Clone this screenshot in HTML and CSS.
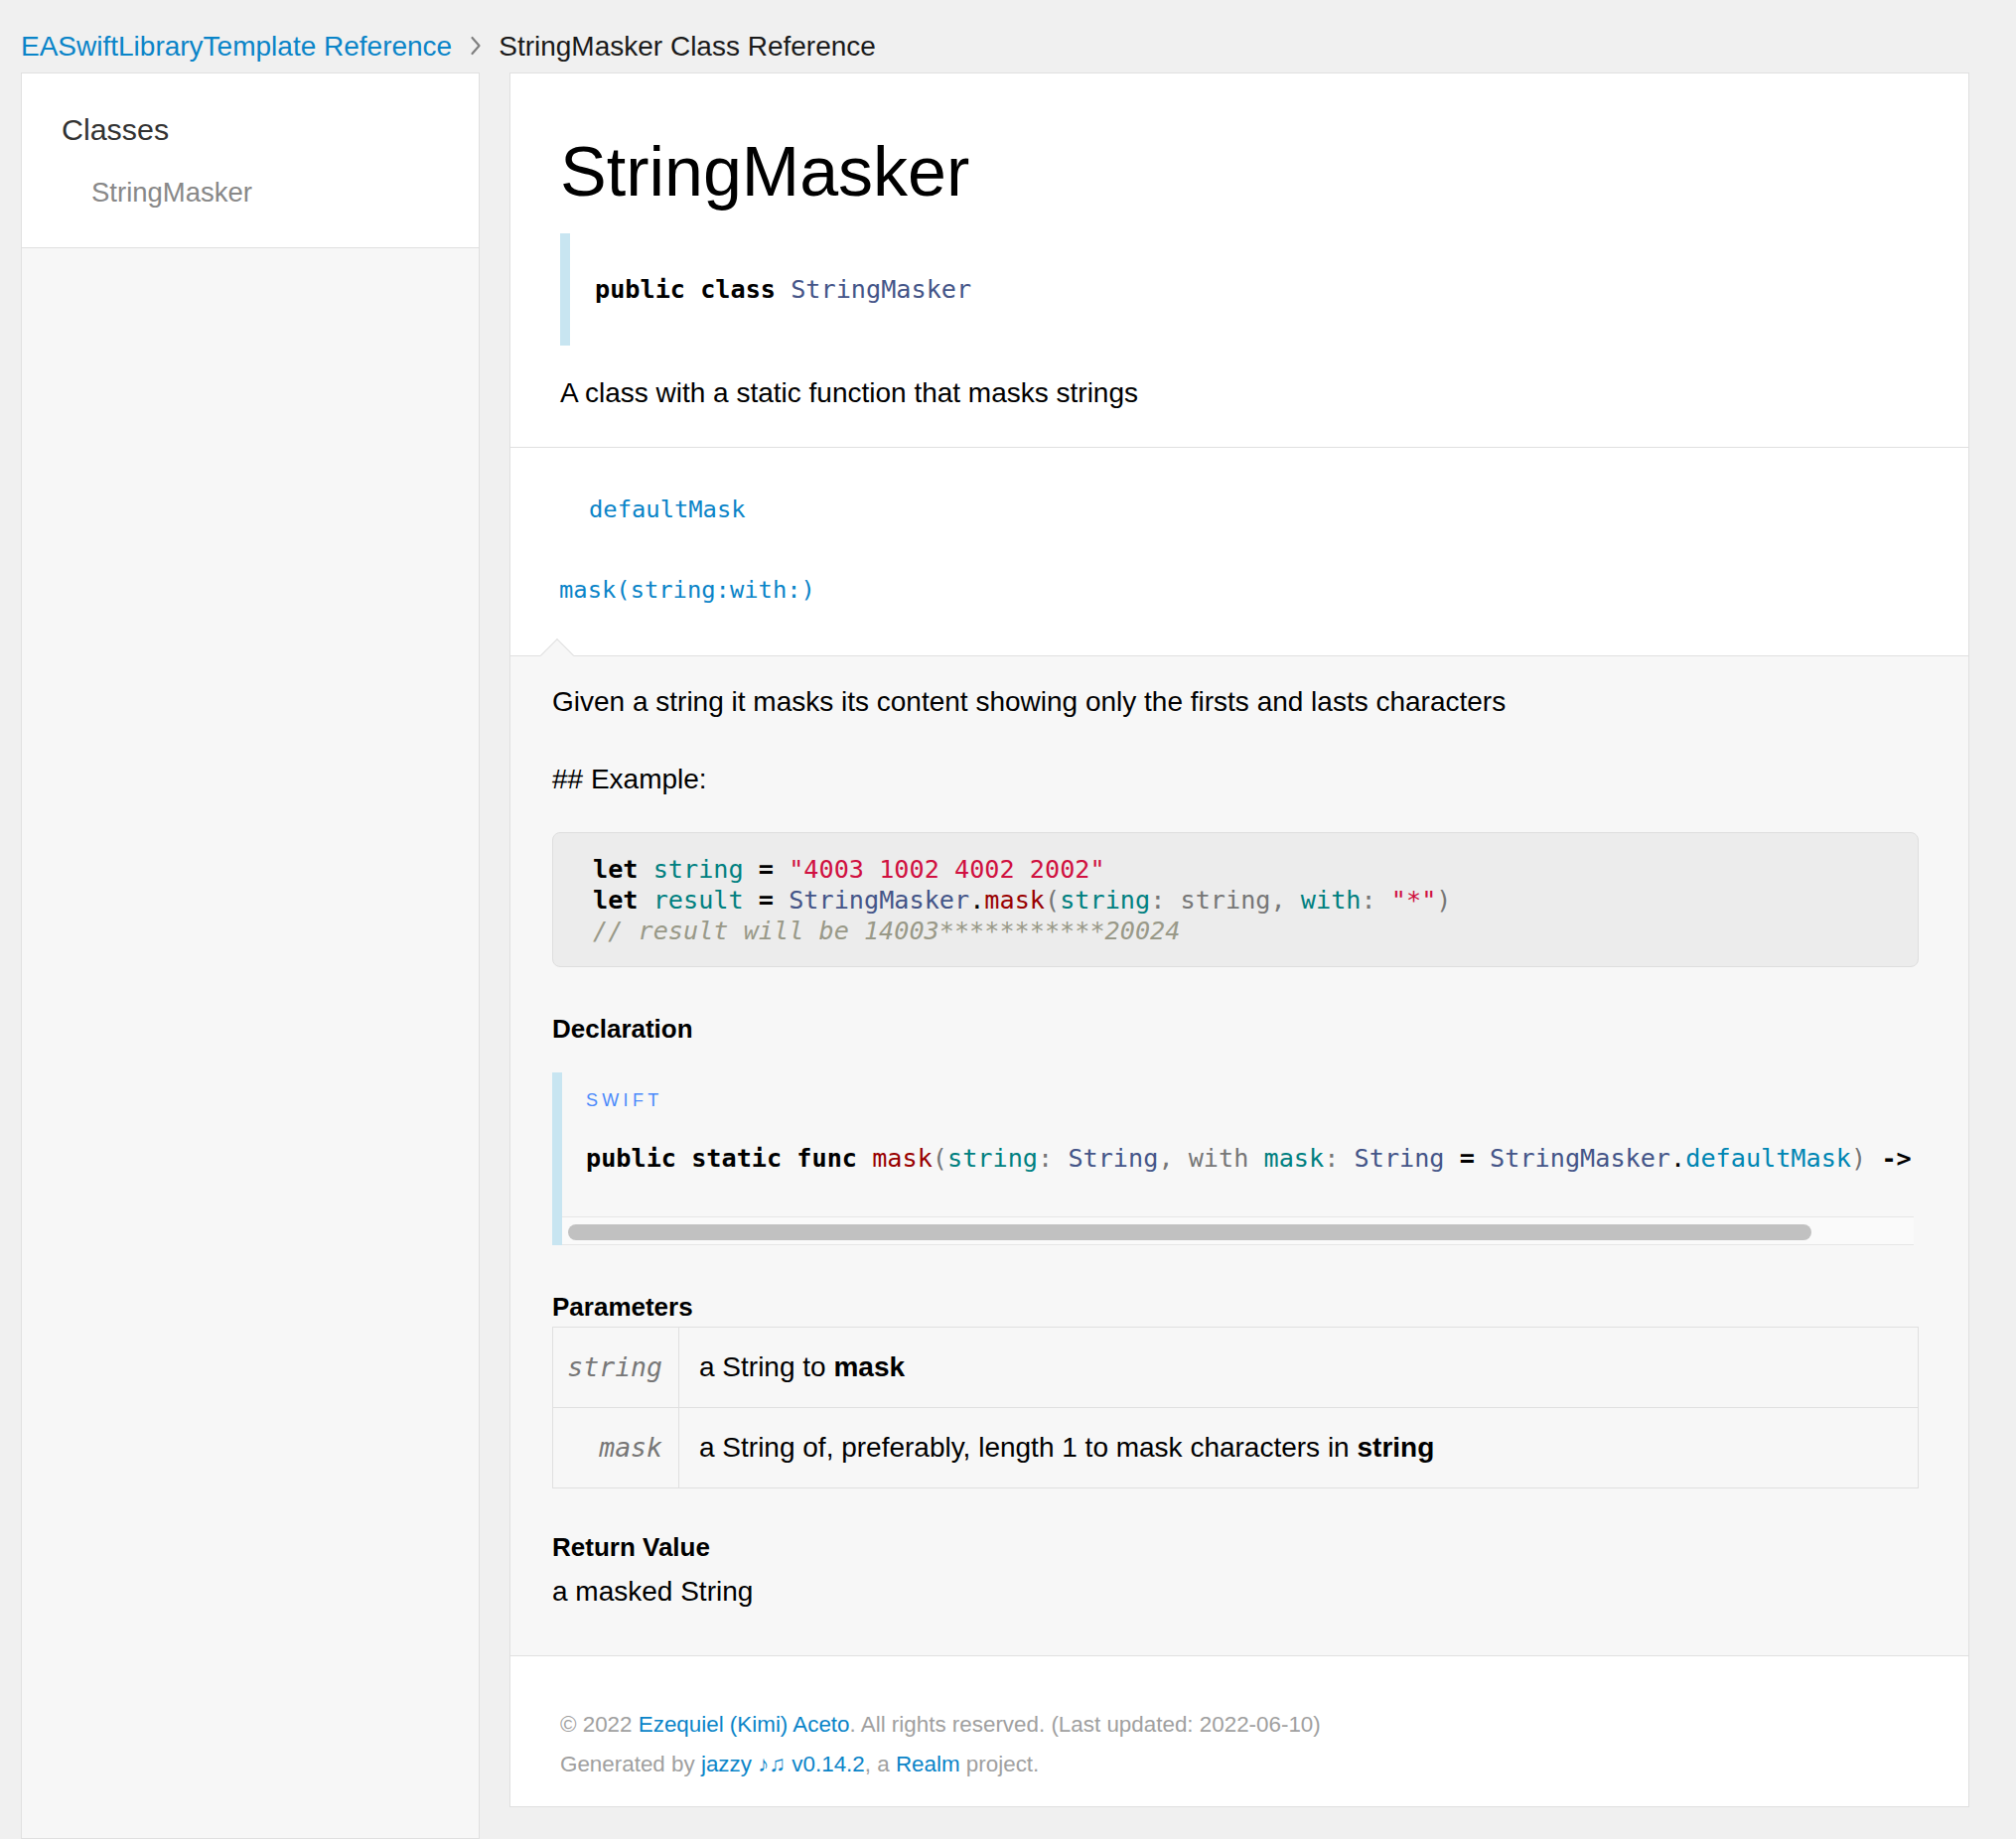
FILE: index.html
```html
<!DOCTYPE html>
<html lang="en">
<head>
<meta charset="utf-8">
<title>StringMasker Class Reference</title>
<link rel="stylesheet" href="styles.css">
</head>
<body>
<p class="breadcrumbs"><a href="#">EASwiftLibraryTemplate Reference</a><svg class="carat" width="12" height="20" viewBox="0 0 12 20"><path d="M2.5 2 L9.5 10 L2.5 18" fill="none" stroke="#808080" stroke-width="2.2" stroke-linecap="round" stroke-linejoin="round"/></svg>StringMasker Class Reference</p>
<div class="layout">
  <nav class="sidebar">
    <div class="nav-group">
      <div class="nav-group-name">Classes</div>
      <ul class="nav-group-tasks"><li><a href="#">StringMasker</a></li></ul>
    </div>
  </nav>
  <main class="main-content">
    <section class="intro">
      <h1>StringMasker</h1>
      <div class="declaration"><code><span class="k">public</span> <span class="k">class</span> <span class="kt">StringMasker</span></code></div>
      <p class="lead">A class with a static function that masks strings</p>
    </section>
    <section class="task-group">
      <ul class="tokens">
        <li class="token-item indented"><a class="token" href="#">defaultMask</a></li>
        <li class="token-item second"><a class="token" href="#">mask(string:with:)</a></li>
      </ul>
      <div class="pointer"></div>
    </section>
    <section class="details">
      <p class="first">Given a string it masks its content showing only the firsts and lasts characters</p>
      <p class="example">## Example:</p>
      <pre class="highlight"><code><span class="k">let</span> <span class="n">string</span> <span class="o">=</span> <span class="s">"4003 1002 4002 2002"</span>
<span class="k">let</span> <span class="n">result</span> <span class="o">=</span> <span class="kt">StringMasker</span><span class="dot">.</span><span class="nf">mask</span>(<span class="n">string</span>: string, <span class="n">with</span>: <span class="s">"*"</span>)
<span class="c">// result will be 14003***********20024</span></code></pre>
      <h4 class="first-h">Declaration</h4>
      <div class="language">
        <p class="aside-title">Swift</p>
        <div class="decl-code"><code><span class="k">public</span> <span class="k">static</span> <span class="k">func</span> <span class="nf">mask</span>(<span class="n">string</span>: <span class="kt">String</span>, with <span class="n">mask</span>: <span class="kt">String</span> <span class="o">=</span> <span class="kt">StringMasker</span><span class="dot">.</span><span class="nv">defaultMask</span>) <span class="o">-&gt;</span></code></div>
        <div class="scroll-track"><div class="scroll-thumb"></div></div>
      </div>
      <h4>Parameters</h4>
      <table class="graybox">
        <tbody>
          <tr>
            <td class="param-name"><em>string</em></td>
            <td class="param-desc">a String to <strong>mask</strong></td>
          </tr>
          <tr>
            <td class="param-name"><em>mask</em></td>
            <td class="param-desc">a String of, preferably, length 1 to mask characters in <strong>string</strong></td>
          </tr>
        </tbody>
      </table>
      <h4 class="return-h">Return Value</h4>
      <p class="return">a masked String</p>
    </section>
    <footer class="footer">
      <p>© 2022 <a href="#">Ezequiel (Kimi) Aceto</a>. All rights reserved. (Last updated: 2022-06-10)</p>
      <p>Generated by <a href="#">jazzy ♪♫ v0.14.2</a>, a <a href="#">Realm</a> project.</p>
    </footer>
  </main>
</div>
</body>
</html>
```

FILE: styles.css
```css
* {
  box-sizing: border-box;
}

html, body {
  margin: 0;
  padding: 0;
}

body {
  background: #f0f0f0;
  font-family: "Liberation Sans", Arial, Helvetica, sans-serif;
  font-size: 28px;
  color: #000;
  padding-left: 21px;
}

a {
  color: #0a84c8;
  text-decoration: none;
}

ul {
  list-style: none;
  margin: 0;
  padding: 0;
}

code, pre {
  font-family: "DejaVu Sans Mono", "Liberation Mono", monospace;
}

/* breadcrumbs */
.breadcrumbs {
  margin: 0;
  padding-top: 20px;
  height: 73px;
  line-height: 53px;
  font-size: 28px;
  color: #1a1a1a;
  white-space: nowrap;
}

.carat {
  margin: 0 17px 0 18px;
  vertical-align: baseline;
}

/* layout */
.layout {
  display: flex;
  align-items: flex-start;
  gap: 30px;
}

.sidebar {
  width: 462px;
  flex: none;
  min-height: calc(100vh - 73px);
  background: #f7f7f7;
  border: 1px solid #e0e0e0;
}

.nav-group {
  background: #fff;
  border-bottom: 1px solid #e0e0e0;
  padding: 36px 0 35px 40px;
}

.nav-group-name {
  font-size: 30.4px;
  line-height: 40px;
  color: #333;
}

.nav-group-tasks {
  margin-top: 24px;
  padding-left: 30px;
}

.nav-group-tasks li {
  font-size: 27.5px;
  line-height: 40px;
}

.nav-group-tasks a {
  color: #888;
}

/* main */
.main-content {
  width: 1470px;
  flex: none;
  background: #fff;
  border: 1px solid #e0e0e0;
}

.intro {
  padding: 0 50px 34px 50px;
  border-bottom: 1px solid #e0e0e0;
}

h1 {
  margin: 59px 0 22px;
  font-size: 70px;
  line-height: 80px;
  font-weight: normal;
  color: #000;
}

.declaration {
  border-left: 10px solid #c8e5f1;
  padding: 41px 0 41px 25px;
  font-size: 25.2px;
  line-height: 30px;
}

.declaration code,
.decl-code code,
.highlight code {
  font-size: 25.2px;
  color: #777;
}

.lead {
  margin: 28px 0 0;
  line-height: 40px;
}

/* code tokens */
.k, .o {
  color: #000;
  font-weight: bold;
}

.kt {
  color: #445588;
}

.n {
  color: #008080;
}

.nf {
  color: #990000;
}

.s {
  color: #d01040;
}

.nv {
  color: #0086b3;
}

.dot {
  color: #000;
}

.c {
  color: #999988;
  font-style: italic;
}

/* task group */
.task-group {
  position: relative;
  border-bottom: 1px solid #e0e0e0;
}

.tokens {
  padding: 46px 0 50px 49px;
}

.token-item {
  font-size: 23.8px;
  line-height: 32px;
}

.token-item.indented {
  padding-left: 30px;
}

.token-item.second {
  margin-top: 49px;
}

.token {
  font-family: "DejaVu Sans Mono", "Liberation Mono", monospace;
  font-size: 23.8px;
  color: #0a84c8;
}

.pointer {
  position: absolute;
  left: 35px;
  bottom: -12px;
  width: 24px;
  height: 24px;
  background: #f7f7f7;
  border-top: 1px solid #e0e0e0;
  border-left: 1px solid #e0e0e0;
  transform: rotate(45deg);
  z-index: 1;
}

/* details */
.details {
  background: #f7f7f7;
  border-bottom: 1px solid #e0e0e0;
  padding: 26px 50px 44px 42px;
}

.details p {
  margin: 0;
  line-height: 40px;
}

.details p.example {
  margin-top: 38px;
}

.highlight {
  margin: 33px 0 0;
  background: #ececec;
  border: 1px solid #dedede;
  border-radius: 8px;
  padding: 21px 40px 20px 40px;
  font-size: 25.2px;
  line-height: 31px;
  overflow: hidden;
}

h4 {
  margin: 44px 0 0;
  font-size: 26px;
  line-height: 36px;
  font-weight: bold;
  color: #000;
}

h4.return-h {
  margin-top: 41px;
}

.language {
  margin-top: 26px;
  border-left: 10px solid #c8e5f1;
  padding-top: 16px;
}

.details .aside-title {
  margin: 0;
  padding-left: 24px;
  font-size: 18px;
  line-height: 24px;
  letter-spacing: 4.3px;
  text-transform: uppercase;
  color: #4b8afb;
}

.decl-code {
  margin-top: 31px;
  padding: 0 0 43px 24px;
  font-size: 25.2px;
  line-height: 30px;
  white-space: nowrap;
  overflow: hidden;
}

.scroll-track {
  height: 29px;
  border-top: 1px solid #e6e6e6;
  border-bottom: 1px solid #e6e6e6;
  background: #fafafa;
  padding: 7px 0 0 6px;
  margin-right: 5px;
}

.scroll-thumb {
  width: 1252px;
  height: 16px;
  border-radius: 8px;
  background: #c1c1c1;
}

.graybox {
  margin-top: 2px;
  width: 100%;
  border-collapse: collapse;
}

.graybox td {
  border: 1px solid #e0e0e0;
  padding: 20px 20px;
  line-height: 40px;
  vertical-align: middle;
}

.graybox td.param-name {
  width: 127px;
  padding: 20px 16px 20px 10px;
  text-align: right;
}

.param-name em {
  font-family: "DejaVu Sans Mono", "Liberation Mono", monospace;
  font-size: 26.5px;
  font-style: italic;
  color: #777;
}

.param-desc strong {
  font-weight: bold;
}

.details p.return {
  margin-top: 7px;
}

/* footer */
.footer {
  padding: 49px 0 22px 50px;
}

.footer p {
  margin: 0;
  font-size: 22.4px;
  line-height: 40px;
  color: #a0a0a0;
}
```
